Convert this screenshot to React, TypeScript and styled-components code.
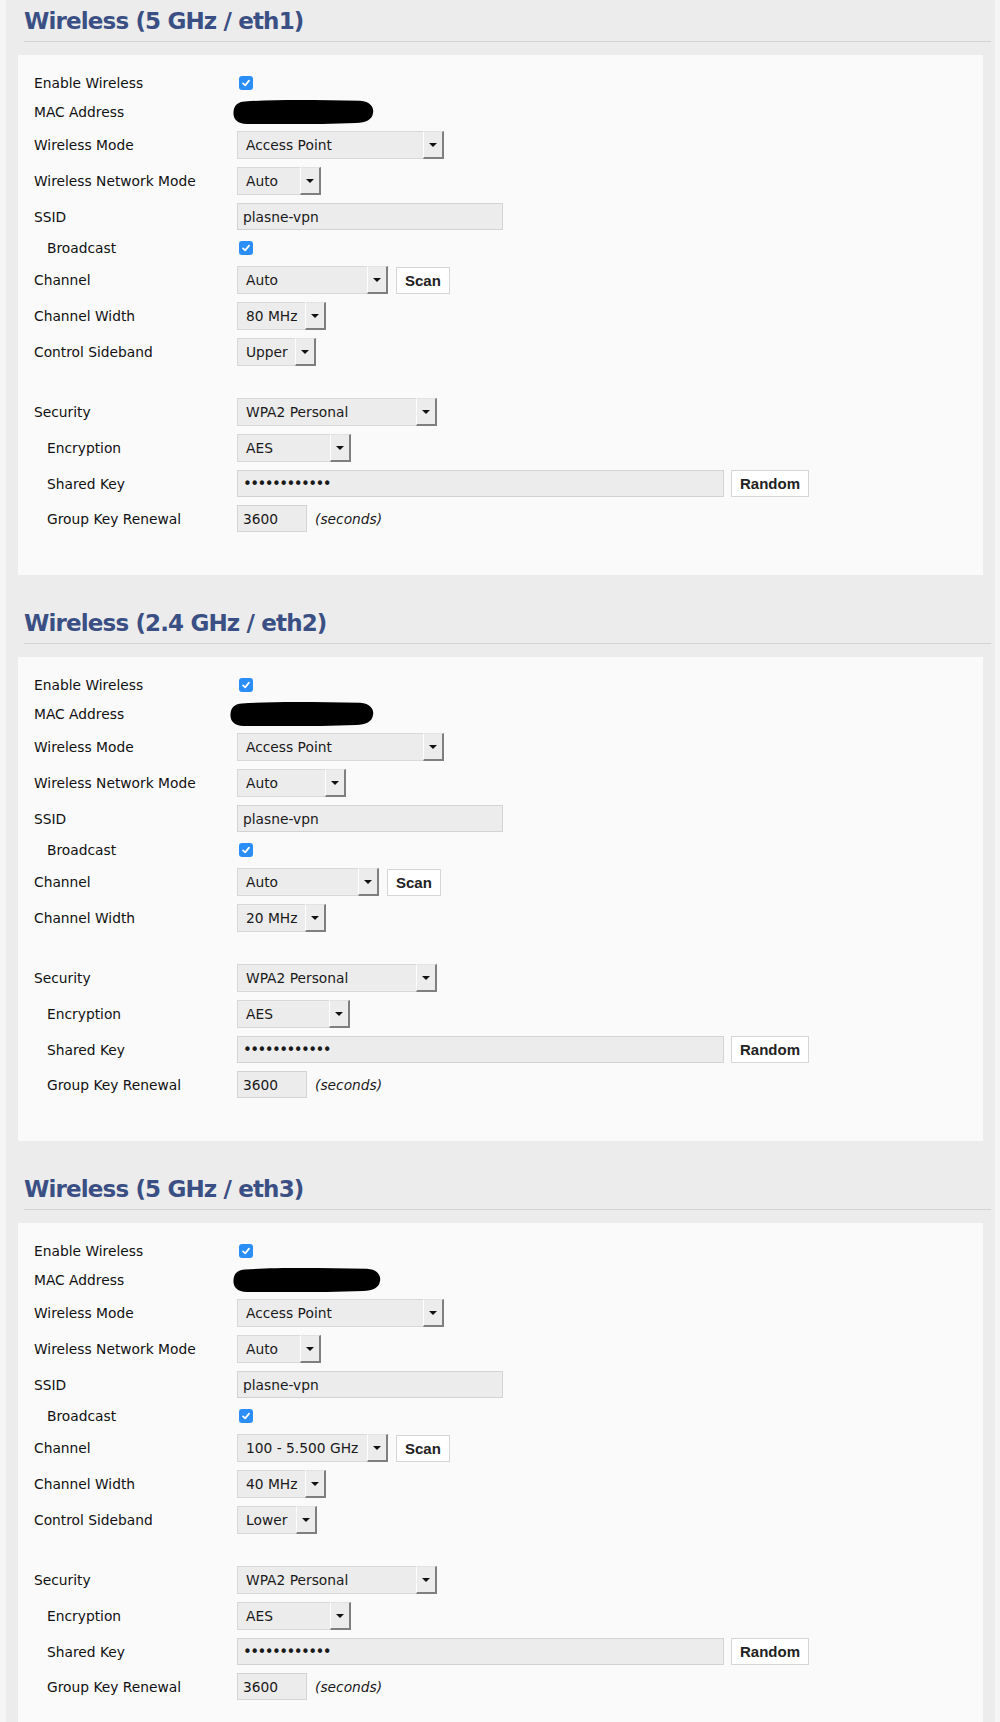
import React from "react";
import styled, { createGlobalStyle } from "styled-components";

const GlobalStyle = createGlobalStyle`
  html, body {
    margin: 0;
    padding: 0;
    overflow: hidden;
  }
  body {
    background: #f5f5f5;
    font-family: "DejaVu Sans", Verdana, sans-serif;
    color: #111;
  }
`;

const Page = styled.div`
  box-sizing: border-box;
  height: 1722px;
  overflow: hidden;
  margin: 0 5px 0 6px;
  padding: 0 12px;
  background: #ececec;
`;

const Section = styled.section`
  & + & {
    margin-top: 27px;
  }
`;

const Title = styled.h2`
  margin: 0 -8px 0 6px;
  padding: 7px 0 6px;
  line-height: 28px;
  font-family: "DejaVu Sans", Verdana, sans-serif;
  font-weight: bold;
  font-size: 23px;
  letter-spacing: -0.85px;
  color: #3a4f83;
  border-bottom: 1px solid #d3d3d3;
`;

const Panel = styled.div`
  margin-top: 13px;
  background: #fafafa;
  padding: 14px 16px 39px;
`;

const Row = styled.div`
  display: grid;
  grid-template-columns: 203px 1fr;
  align-items: center;
  padding: 4px 0;
  min-height: 20px;
`;

const Label = styled.div<{ $indent?: boolean }>`
  font-size: 13.8px;
  line-height: 20px;
  padding-left: ${(p) => (p.$indent ? "13px" : "0")};
  white-space: nowrap;
`;

const Value = styled.div`
  display: flex;
  align-items: center;
`;

const Spacer = styled.div`
  height: 24px;
`;

const CheckBox = styled.span`
  display: inline-flex;
  align-items: center;
  justify-content: center;
  width: 14px;
  height: 14px;
  margin-left: 2px;
  border-radius: 3px;
  background: #2a8ef6;
  box-sizing: border-box;
`;

const SelectBox = styled.div<{ $w: number }>`
  display: inline-flex;
  box-sizing: border-box;
  width: ${(p) => p.$w}px;
  height: 28px;
  border: 1px solid #d8d8d8;
  background: #ececec;
  font-size: 13.8px;
  color: #1a1a1a;
`;

const SelectValue = styled.span`
  flex: 1;
  padding-left: 8px;
  line-height: 26px;
  white-space: nowrap;
  overflow: hidden;
`;

const SelectArrow = styled.span`
  display: flex;
  align-items: center;
  justify-content: center;
  box-sizing: border-box;
  width: 21px;
  margin: -1px -1px -1px 0;
  border-top: 1px solid #e2e2e2;
  border-left: 1px solid #fdfdfd;
  border-right: 2px solid #7f7f7f;
  border-bottom: 2px solid #7f7f7f;
  &::after {
    content: "";
    border-left: 4px solid transparent;
    border-right: 4px solid transparent;
    border-top: 4.5px solid #111;
  }
`;

const TextInput = styled.input<{ $w: number; $dots?: boolean }>`
  box-sizing: border-box;
  width: ${(p) => p.$w}px;
  height: 27px;
  margin: 0;
  padding: 0 5px;
  border: 1px solid #d3d3d3;
  border-radius: 0;
  background: #ececec;
  font-family: "DejaVu Sans", Verdana, sans-serif;
  font-size: ${(p) => (p.$dots ? "15px" : "13.8px")};
  color: #1a1a1a;
  letter-spacing: ${(p) => (p.$dots ? "-1.6px" : "normal")};
  outline: none;
`;

const Button = styled.button<{ $gap: number }>`
  box-sizing: border-box;
  height: 27px;
  margin: 0 0 0 ${(p) => p.$gap}px;
  padding: 0 8px;
  background: #fff;
  border: 1px solid #d6d6d6;
  border-radius: 0;
  font-family: "Liberation Sans", Arial, sans-serif;
  font-weight: bold;
  font-size: 15px;
  color: #222;
`;

const Unit = styled.span`
  margin-left: 8px;
  font-style: italic;
  font-size: 13.8px;
  color: #1a1a1a;
`;

const Redact = styled.svg<{ $dx: number }>`
  display: block;
  margin: -2px 0 -2px ${(p) => p.$dx}px;
`;

const Check = () => (
  <CheckBox>
    <svg width="10" height="10" viewBox="0 0 10 10">
      <path d="M2 5.3 L4.2 7.4 L8 2.6" fill="none" stroke="#fff" strokeWidth="1.7" strokeLinecap="round" strokeLinejoin="round" />
    </svg>
  </CheckBox>
);

const Select = ({ value, w }: { value: string; w: number }) => (
  <SelectBox $w={w}>
    <SelectValue>{value}</SelectValue>
    <SelectArrow />
  </SelectBox>
);

const MacBlob = ({ w, dx }: { w: number; dx: number }) => (
  <Redact $dx={dx} width={w} height={26} viewBox={`0 0 ${w} 26`}>
    <path
      d={`M12 2.5 C40 0.5 ${w * 0.6} 1 ${w - 14} 1.8 C${w - 2} 2.6 ${w} 10 ${w - 1} 14 C${w - 2} 21 ${w - 8} 23.5 ${w - 18} 24 C${w * 0.6} 25.6 40 25 14 25 C3 24.6 0 19 0.5 13 C1 6 5 3 12 2.5 Z`}
      fill="#000"
    />
  </Redact>
);

type Field =
  | { kind: "check"; label: string; indent?: boolean }
  | { kind: "mac"; label: string; w: number; dx: number }
  | { kind: "select"; label: string; value: string; w: number; indent?: boolean; scan?: number }
  | { kind: "input"; label: string; value: string; w: number; indent?: boolean }
  | { kind: "key"; label: string; w: number }
  | { kind: "renew"; label: string }
  | { kind: "spacer" };

type SectionData = { title: string; fields: Field[] };

const security = (encW: number): Field[] => [
  { kind: "spacer" },
  { kind: "select", label: "Security", value: "WPA2 Personal", w: 200 },
  { kind: "select", label: "Encryption", value: "AES", w: encW, indent: true },
  { kind: "key", label: "Shared Key", w: 487 },
  { kind: "renew", label: "Group Key Renewal" },
];

const sections: SectionData[] = [
  {
    title: "Wireless (5 GHz / eth1)",
    fields: [
      { kind: "check", label: "Enable Wireless" },
      { kind: "mac", label: "MAC Address", w: 141, dx: -4 },
      { kind: "select", label: "Wireless Mode", value: "Access Point", w: 207 },
      { kind: "select", label: "Wireless Network Mode", value: "Auto", w: 84 },
      { kind: "input", label: "SSID", value: "plasne-vpn", w: 266 },
      { kind: "check", label: "Broadcast", indent: true },
      { kind: "select", label: "Channel", value: "Auto", w: 151, scan: 8 },
      { kind: "select", label: "Channel Width", value: "80 MHz", w: 89 },
      { kind: "select", label: "Control Sideband", value: "Upper", w: 79 },
      ...security(114),
    ],
  },
  {
    title: "Wireless (2.4 GHz / eth2)",
    fields: [
      { kind: "check", label: "Enable Wireless" },
      { kind: "mac", label: "MAC Address", w: 144, dx: -7 },
      { kind: "select", label: "Wireless Mode", value: "Access Point", w: 207 },
      { kind: "select", label: "Wireless Network Mode", value: "Auto", w: 109 },
      { kind: "input", label: "SSID", value: "plasne-vpn", w: 266 },
      { kind: "check", label: "Broadcast", indent: true },
      { kind: "select", label: "Channel", value: "Auto", w: 142, scan: 8 },
      { kind: "select", label: "Channel Width", value: "20 MHz", w: 89 },
      ...security(113),
    ],
  },
  {
    title: "Wireless (5 GHz / eth3)",
    fields: [
      { kind: "check", label: "Enable Wireless" },
      { kind: "mac", label: "MAC Address", w: 148, dx: -4 },
      { kind: "select", label: "Wireless Mode", value: "Access Point", w: 207 },
      { kind: "select", label: "Wireless Network Mode", value: "Auto", w: 84 },
      { kind: "input", label: "SSID", value: "plasne-vpn", w: 266 },
      { kind: "check", label: "Broadcast", indent: true },
      { kind: "select", label: "Channel", value: "100 - 5.500 GHz", w: 151, scan: 8 },
      { kind: "select", label: "Channel Width", value: "40 MHz", w: 89 },
      { kind: "select", label: "Control Sideband", value: "Lower", w: 80 },
      ...security(114),
    ],
  },
];

const FieldRow = ({ f }: { f: Field }) => {
  if (f.kind === "spacer") return <Spacer />;
  const indent =
    f.kind === "key" || f.kind === "renew" ? true : "indent" in f ? !!f.indent : false;
  let value: React.ReactNode = null;
  switch (f.kind) {
    case "check":
      value = <Check />;
      break;
    case "mac":
      value = <MacBlob w={f.w} dx={f.dx} />;
      break;
    case "select":
      value = (
        <>
          <Select value={f.value} w={f.w} />
          {f.scan !== undefined && <Button $gap={f.scan}>Scan</Button>}
        </>
      );
      break;
    case "input":
      value = <TextInput $w={f.w} value={f.value} readOnly />;
      break;
    case "key":
      value = (
        <>
          <TextInput $w={f.w} $dots value={"\u2022".repeat(12)} readOnly />
          <Button $gap={7}>Random</Button>
        </>
      );
      break;
    case "renew":
      value = (
        <>
          <TextInput $w={70} value="3600" readOnly />
          <Unit>(seconds)</Unit>
        </>
      );
      break;
  }
  return (
    <Row>
      <Label $indent={indent}>{f.label}</Label>
      <Value>{value}</Value>
    </Row>
  );
};

export default function App() {
  return (
    <>
      <GlobalStyle />
      <Page>
        {sections.map((s) => (
          <Section key={s.title}>
            <Title>{s.title}</Title>
            <Panel>
              {s.fields.map((f, i) => (
                <FieldRow key={i} f={f} />
              ))}
            </Panel>
          </Section>
        ))}
      </Page>
    </>
  );
}
